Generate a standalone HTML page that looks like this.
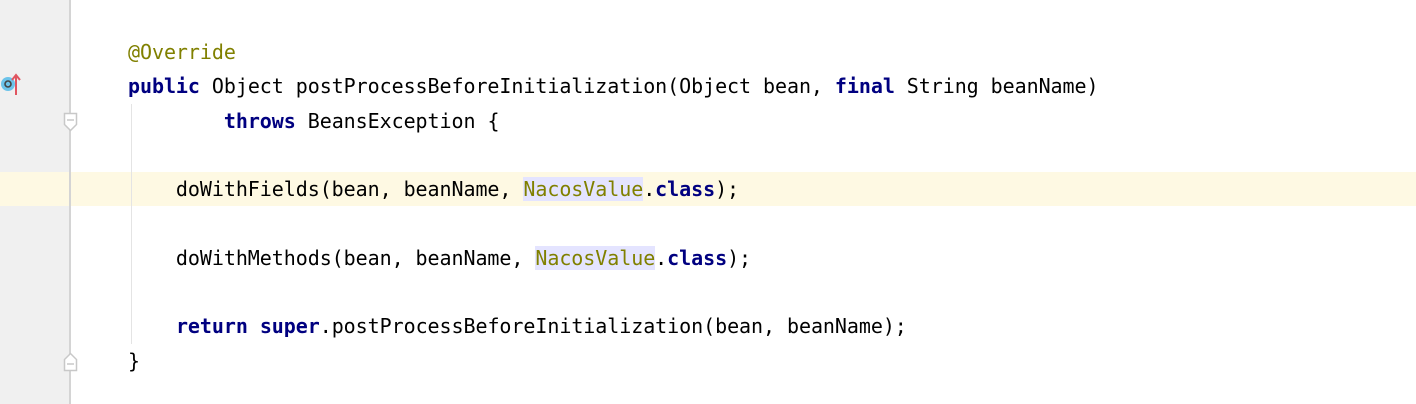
<!DOCTYPE html>
<html><head><style>
html,body{margin:0;padding:0;width:1416px;height:404px;overflow:hidden;background:#fff;}
.g{position:absolute;left:0;top:0;width:69px;height:404px;background:#f0f0f0;}
.sep{position:absolute;left:69px;top:0;width:2px;height:404px;background:#d4d4d4;}
.hl{position:absolute;left:0;top:172px;width:1416px;height:34px;background:#fef9e3;}
.guide{position:absolute;left:131px;top:104px;width:1px;height:240px;background:#e4e4e4;}
.code{position:absolute;left:128px;top:35px;font-family:"DejaVu Sans Mono","Liberation Mono",monospace;font-size:20px;letter-spacing:-0.06px;line-height:34.3px;white-space:pre;color:#000;}
.k{color:#000080;font-weight:bold;}
.a{color:#808000;}
.n{color:#808000;background:#e4e4ff;}
</style></head><body>
<div class="g"></div>
<div class="hl"></div>
<div class="sep"></div>
<div class="guide"></div>
<svg style="position:absolute;left:0;top:72px" width="24" height="26">
<circle cx="8" cy="12" r="7" fill="#6cc3ea"/><circle cx="8" cy="12" r="3" fill="none" stroke="#444" stroke-width="1.6"/>
<path d="M16 23V4M12 8l4-5 4 5" stroke="#e05560" stroke-width="2" fill="none"/>
</svg>
<svg style="position:absolute;left:63px;top:112px" width="16" height="22"><path d="M1.5 1.5h12v11l-6 6-6-6z" fill="#fff" stroke="#c8c8c8" stroke-width="1.5"/><path d="M4 8h7" stroke="#c8c8c8" stroke-width="1.5"/></svg>
<svg style="position:absolute;left:63px;top:350px" width="16" height="22"><path d="M1.5 20.5h12v-11l-6-6-6 6z" fill="#fff" stroke="#c8c8c8" stroke-width="1.5"/><path d="M4 14h7" stroke="#c8c8c8" stroke-width="1.5"/></svg>
<div class="code"><span class="a">@Override</span>
<span class="k">public</span> Object postProcessBeforeInitialization(Object bean, <span class="k">final</span> String beanName)
        <span class="k">throws</span> BeansException {

    doWithFields(bean, beanName, <span class="n">NacosValue</span>.<span class="k">class</span>);

    doWithMethods(bean, beanName, <span class="n">NacosValue</span>.<span class="k">class</span>);

    <span class="k">return</span> <span class="k">super</span>.postProcessBeforeInitialization(bean, beanName);
}</div>
</body></html>
